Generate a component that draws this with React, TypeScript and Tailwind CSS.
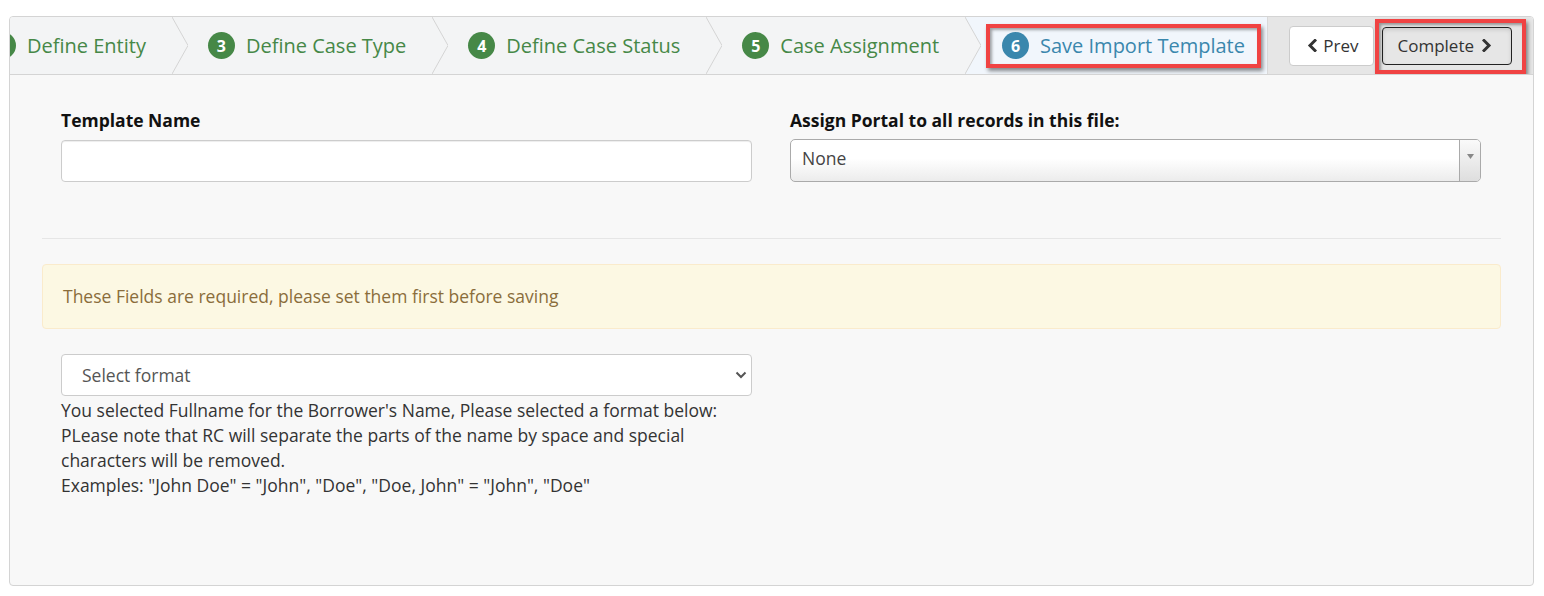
import React from "react";

// Wizard step data: every step before the last one is complete
const steps = [
  { num: 2, label: "Define Entity" },
  { num: 3, label: "Define Case Type" },
  { num: 4, label: "Define Case Status" },
  { num: 5, label: "Case Assignment" },
];

const Chevron = ({ activeNext = false }: { activeNext?: boolean }) => (
  <svg width="16" height="57" viewBox="0 0 16 57" className="shrink-0 block">
    <rect x="0" y="0" width="16" height="57" fill="#f3f4f5" />
    {activeNext && (
      <polygon points="0,0 16,0 16,57 0,57 16,28.5" fill="#f1f6fc" />
    )}
    <polyline
      points="0,0 16,28.5 0,57"
      fill="none"
      stroke="#d4d4d4"
      strokeWidth="1"
    />
  </svg>
);

const Badge = ({ num, color }: { num: number; color: string }) => (
  <span
    className={`flex items-center justify-center w-[27px] h-[27px] rounded-full text-white text-[16px] font-bold shrink-0 ${color}`}
  >
    {num}
  </span>
);

const ChevronLeft = () => (
  <svg width="10" height="13" viewBox="0 0 10 13" className="block">
    <polyline
      points="8,1.5 3,6.5 8,11.5"
      fill="none"
      stroke="#333"
      strokeWidth="3"
      strokeLinecap="square"
    />
  </svg>
);

const ChevronRight = () => (
  <svg width="10" height="13" viewBox="0 0 10 13" className="block">
    <polyline
      points="2,1.5 7,6.5 2,11.5"
      fill="none"
      stroke="#333"
      strokeWidth="3"
      strokeLinecap="square"
    />
  </svg>
);

const App = () => {
  return (
    <div className="w-full min-h-screen bg-white pt-4 pl-[9px] pr-[10px] font-['Open_Sans',sans-serif]">
      <div className="flex flex-col h-[570px] border border-[#d4d4d4] rounded-[4px] bg-[#f8f8f8] overflow-hidden">
        {/* Wizard steps */}
        <div className="flex h-[58px] border-b border-[#d4d4d4] bg-[#f3f4f5] overflow-hidden shrink-0">
          {steps.map((step, index) => (
            <React.Fragment key={step.num}>
              <div
                className={`flex items-center gap-[11px] pr-[26px] whitespace-nowrap shrink-0 ${
                  index === 0 ? "ml-[-21px]" : "pl-5"
                }`}
              >
                <Badge num={step.num} color="bg-[#468847]" />
                <span className="text-[20px] text-[#468847]">{step.label}</span>
              </div>
              <Chevron activeNext={index === steps.length - 1} />
            </React.Fragment>
          ))}

          {/* Active step */}
          <div className="relative flex items-center gap-[11px] pl-[21px] pr-[22px] whitespace-nowrap shrink-0 bg-[#f1f6fc]">
            <Badge num={6} color="bg-[#3a87ad]" />
            <span className="text-[20px] text-[#3a87ad]">Save Import Template</span>
            <div className="absolute left-[5px] top-[7px] w-[275px] h-[44px] border-4 border-[#f04343] shadow-[2px_3px_4px_rgba(0,0,0,0.45),inset_2px_2px_3px_rgba(0,0,0,0.35)] pointer-events-none" />
          </div>

          {/* Actions */}
          <div className="flex flex-1 items-center justify-end gap-2 px-[21px] bg-[#e6e6e6] border-l border-[#d9d9d9]">
            <button className="flex items-center gap-[6px] h-10 pl-[17px] pr-[15px] bg-white border border-[#ccc] rounded-[4px] text-[17px] text-[#333]">
              <ChevronLeft />
              Prev
            </button>
            <div className="relative">
              <button className="flex items-center gap-2 h-[38px] pl-[14px] pr-[19px] bg-[#e6e6e6] border border-[#222] rounded-[4px] text-[17px] text-[#333] shadow-[inset_0_2px_4px_rgba(0,0,0,0.12)]">
                Complete
                <ChevronRight />
              </button>
              <div className="absolute left-[-7px] right-[-14px] top-[-8px] bottom-[-9px] border-4 border-[#f04343] shadow-[2px_3px_4px_rgba(0,0,0,0.45),inset_2px_2px_3px_rgba(0,0,0,0.35)] pointer-events-none" />
            </div>
          </div>
        </div>

        {/* Body */}
        <div className="flex-1 px-8 pt-[33px]">
          <div className="grid grid-cols-[691px_691px] gap-x-[38px] px-[19px]">
            <div>
              <label className="block text-[17.5px] leading-[25px] font-bold text-[#111]">
                Template Name
              </label>
              <input
                type="text"
                className="mt-[7px] block w-full h-[42px] bg-white border border-[#ccc] rounded-[4px] px-3 text-[17.5px] shadow-[inset_0_1px_1px_rgba(0,0,0,0.075)] outline-none"
              />
            </div>
            <div>
              <label className="block text-[17.5px] leading-[25px] font-bold text-[#111]">
                Assign Portal to all records in this file:
              </label>
              <div className="mt-[6px] flex h-[43px] border border-[#aaa] rounded-[5px] overflow-hidden bg-[linear-gradient(#fff_45%,#ececec_100%)]">
                <span className="flex-1 flex items-center pl-[11px] pb-[4px] text-[17.5px] text-[#444]">
                  None
                </span>
                <span className="flex justify-center w-[21px] pt-[14px] border-l border-[#aaa] bg-[linear-gradient(#fafafa,#dedede)]">
                  <svg width="7" height="5" viewBox="0 0 7 5" className="block">
                    <polygon points="0,0 7,0 3.5,5" fill="#888" />
                  </svg>
                </span>
              </div>
            </div>
          </div>

          <hr className="mt-[56px] border-0 border-t border-[#e6e6e6]" />

          <div className="mt-[25px] px-5 py-[19px] bg-[#fcf8e3] border border-[#faebcc] rounded-[4px] text-[17.5px] leading-[25px] text-[#8a6d3b]">
            These Fields are required, please set them first before saving
          </div>

          <div className="mt-[25px] px-[19px] w-[729px]">
            <div className="relative">
              <select className="block w-full h-[42px] appearance-none bg-white border border-[#ccc] rounded-[4px] pl-5 text-[17.5px] text-[#555] outline-none">
                <option>Select format</option>
              </select>
              <svg
                width="12"
                height="8"
                viewBox="0 0 12 8"
                className="absolute right-[5px] top-[17px] pointer-events-none"
              >
                <polyline
                  points="1.5,1.5 6,6 10.5,1.5"
                  fill="none"
                  stroke="#555"
                  strokeWidth="2"
                />
              </svg>
            </div>
            <p className="mt-[2px] text-[17.5px] leading-[25px] text-[#333]">
              You selected Fullname for the Borrower's Name, Please selected a format below:
              <br />
              PLease note that RC will separate the parts of the name by space and special characters will be removed.
              <br />
              Examples: "John Doe" = "John", "Doe", "Doe, John" = "John", "Doe"
            </p>
          </div>
        </div>
      </div>
    </div>
  );
};

export default App;
